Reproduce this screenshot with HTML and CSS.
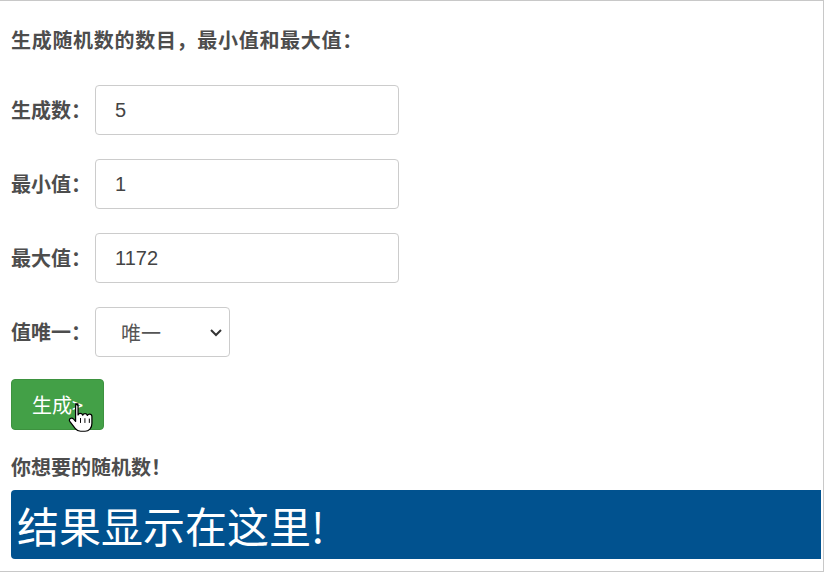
FILE: index.html
```html
<!DOCTYPE html>
<html lang="zh-CN">
  <head>
    <meta charset="UTF-8" />
    <meta name="viewport" content="width=device-width, initial-scale=1.0" />
    <title>随机数生成器</title>
    <link rel="stylesheet" href="styles.css">
  </head>
  <body>
    <div class="panel">
      <h3 class="title">生成随机数的数目，最小值和最大值：</h3>
      <form id="randForm" class="rand-form">
        <div class="row">
          <label for="count">生成数：</label>
          <input type="text" id="count" name="count" value="5" />
        </div>
        <div class="row">
          <label for="min">最小值：</label>
          <input type="text" id="min" name="min" value="1" />
        </div>
        <div class="row">
          <label for="max">最大值：</label>
          <input type="text" id="max" name="max" value="1172" />
        </div>
        <div class="row">
          <label for="unique">值唯一：</label>
          <div class="select-wrap">
            <select id="unique" name="unique">
              <option value="1">唯一</option>
              <option value="0">可重复</option>
            </select>
            <svg class="chevron" width="14" height="9" viewBox="0 0 14 9">
              <path d="M2 2l5 5 5-5" fill="none" stroke="#333" stroke-width="2" />
            </svg>
          </div>
        </div>
        <div class="btn-wrap">
          <button type="button" class="btn-go">生成&gt;</button>
          <!-- mouse pointer over the button -->
          <svg class="pointer" width="27" height="32" viewBox="0 0 22 26">
            <path d="M7 1.5c1.1 0 2 .9 2 2v7c.3-.8 1-1.2 1.9-1.2.9 0 1.6.6 1.9 1.4.3-.8 1-1.2 1.9-1.2.9 0 1.6.6 1.9 1.4.3-.7 1-1.1 1.8-1.1 1.1 0 1.9.9 1.9 2v5.7c0 3.6-2.4 6.3-5.6 6.3h-3.6c-1.9 0-3.2-.8-4.3-2.2l-4.4-5.6c-.7-.9-.6-2 .3-2.6.9-.6 2-.3 2.7.5l1.6 1.9V3.5c0-1.1.9-2 2-2z" fill="#fff" stroke="#000" stroke-width="1" stroke-linejoin="round" />
            <path d="M11 13v4M14.6 13.2v3.8M18.2 13.5v3.5" stroke="#000" stroke-width="0.8" />
          </svg>
        </div>
      </form>
      <h3 class="result-label">你想要的随机数！</h3>
      <div class="result" id="result">结果显示在这里!</div>
    </div>

    <script>
      document.querySelector(".btn-go").addEventListener("click", function () {
        const count = parseInt(document.getElementById("count").value, 10);
        const min = parseInt(document.getElementById("min").value, 10);
        const max = parseInt(document.getElementById("max").value, 10);
        const unique = document.getElementById("unique").value === "1";
        const out = [];
        while (out.length < count) {
          const n = Math.floor(Math.random() * (max - min + 1)) + min;
          if (unique && out.includes(n)) continue;
          out.push(n);
        }
        document.getElementById("result").textContent = out.join(", ");
      });
    </script>
  </body>
</html>
```

FILE: styles.css
```css
html,
body {
  margin: 0;
  background: #fff;
}

body {
  font-family: "Noto Sans CJK SC", "Liberation Sans", sans-serif;
  color: #4d4d4d;
}

.panel {
  box-sizing: border-box;
  width: 824px;
  height: 572px;
  border: 1px solid #c8c8c8;
  border-left: none;
  padding: 24px 2px 0 11px;
  overflow: hidden;
}

.title,
.result-label {
  margin: 0;
  font-size: 20px;
  line-height: 30px;
  font-weight: bold;
}

.title {
  letter-spacing: 0.7px;
}

.rand-form {
  margin-top: 30px;
}

.row {
  display: flex;
  align-items: center;
  gap: 4px;
  margin-bottom: 24px;
}

.row label {
  width: 80px;
  font-size: 20px;
  font-weight: bold;
  white-space: nowrap;
  position: relative;
  top: -1px;
}

.row input[type="text"] {
  box-sizing: border-box;
  width: 304px;
  height: 50px;
  padding: 0 19px;
  border: 1px solid #ccc;
  border-radius: 4px;
  font-family: "Liberation Sans", "Noto Sans CJK SC", sans-serif;
  font-size: 20px;
  color: #444;
  outline: none;
}

/* select with our own arrow */
.select-wrap {
  position: relative;
}

.select-wrap select {
  box-sizing: border-box;
  width: 135px;
  height: 50px;
  padding: 0 0 0 25px;
  border: 1px solid #ccc;
  border-radius: 4px;
  background: #fff;
  appearance: none;
  font-family: "Noto Sans CJK SC", sans-serif;
  font-size: 20px;
  color: #555;
  outline: none;
}

.chevron {
  position: absolute;
  right: 7px;
  top: 21px;
  pointer-events: none;
}

.btn-wrap {
  position: relative;
  margin-top: -2px;
}

.btn-go {
  width: 93px;
  height: 51px;
  padding: 0;
  border: 1px solid #3d923f;
  border-radius: 4px;
  background-color: #43a047;
  color: #fff;
  font-family: "Noto Sans CJK SC", "Liberation Sans", sans-serif;
  font-size: 20px;
  cursor: pointer;
}

.pointer {
  position: absolute;
  left: 56px;
  top: 23px;
}

.result-label {
  margin-top: 22px;
}

.result {
  margin-top: 8px;
  height: 69px;
  padding-left: 6px;
  background-color: #01528f;
  border-radius: 4px 0 0 4px;
  color: #fff;
  font-size: 42px;
  line-height: 69px;
  white-space: nowrap;
}
```
